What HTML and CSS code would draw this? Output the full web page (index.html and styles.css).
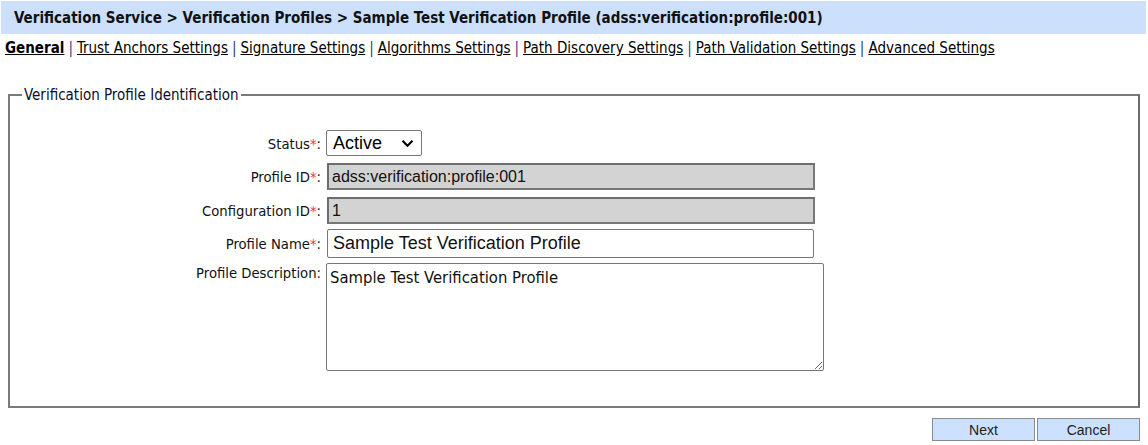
FILE: index.html
```html
<!DOCTYPE html>
<html>
<head>
<meta charset="utf-8">
<link rel="stylesheet" href="styles.css">
</head>
<body>
<div class="titlebar">Verification Service &gt; Verification Profiles &gt; Sample Test Verification Profile (adss:verification:profile:001)</div>
<div class="tabs">
  <a class="tab active" href="#">General</a><span class="sep">|</span><a class="tab" href="#">Trust Anchors Settings</a><span class="sep">|</span><a class="tab" href="#">Signature Settings</a><span class="sep">|</span><a class="tab" href="#">Algorithms Settings</a><span class="sep">|</span><a class="tab" href="#">Path Discovery Settings</a><span class="sep">|</span><a class="tab" href="#">Path Validation Settings</a><span class="sep">|</span><a class="tab" href="#">Advanced Settings</a>
</div>
<fieldset class="box">
  <legend class="box-title">Verification Profile Identification</legend>
  <div class="form">
    <label class="lbl">Status<span class="req">*</span>:</label>
    <div class="field">
      <div class="select">Active
        <svg class="chev" width="13" height="9" viewBox="0 0 13 9"><path d="M1.5 1.8 L6.5 6.8 L11.5 1.8" fill="none" stroke="#000" stroke-width="2.2"/></svg>
      </div>
    </div>
    <label class="lbl spaced">Profile ID<span class="req">*</span>:</label>
    <div class="field spaced"><input class="inp ro" type="text" value="adss:verification:profile:001" readonly></div>
    <label class="lbl spaced">Configuration ID<span class="req">*</span>:</label>
    <div class="field spaced"><input class="inp ro" type="text" value="1" readonly></div>
    <label class="lbl">Profile Name<span class="req">*</span>:</label>
    <div class="field"><input class="inp name" type="text" value="Sample Test Verification Profile"></div>
    <label class="lbl top">Profile Description:</label>
    <div class="field"><textarea class="desc">Sample Test Verification Profile</textarea></div>
  </div>
</fieldset>
<div class="actions">
  <button class="btn">Next</button><button class="btn">Cancel</button>
</div>
</body>
</html>
```
FILE: styles.css
```css
html, body {
  margin: 0;
  padding: 0;
  background: #fff;
}
body {
  font-family: "DejaVu Sans Condensed", "DejaVu Sans", sans-serif;
  font-size: 14.7px;
  color: #000;
}
.titlebar {
  margin: 1px 2px 0 1px;
  height: 33px;
  line-height: 34px;
  background: #cce0fb;
  padding-left: 13px;
  font-weight: bold;
  font-size: 15px;
  color: #111;
}
.tabs {
  margin-top: 4px;
  padding-left: 5px;
  height: 20px;
  line-height: 20px;
  font-size: 15px;
}
.tab {
  color: #000;
  text-decoration: underline;
}
.tab.active {
  font-weight: bold;
}
.sep {
  color: #1d3f7a;
  margin: 0 4px;
}
.box {
  margin: 28px 8px 0 8px;
  padding: 26px 0 35px 0;
  border: 2px solid #7a7a7a;
  border-right-color: #6a6a6a;
  min-width: 0;
}
.box-title {
  margin-left: 12px;
  padding: 0 2px;
  font-size: 15px;
  color: #0d0d2a;
}
.form {
  display: grid;
  grid-template-columns: 311px 1fr;
  column-gap: 6px;
  row-gap: 5px;
  align-items: center;
}
.spaced {
  margin-top: 2px;
}
.lbl {
  text-align: right;
  color: #111;
}
.lbl.top {
  align-self: start;
  padding-top: 1px;
}
.req {
  color: #f33;
}
.field {
  display: flex;
}
.select {
  box-sizing: border-box;
  width: 96px;
  height: 26px;
  border: 1px solid #767676;
  border-radius: 2px;
  padding-left: 6px;
  font-family: "Liberation Sans", Arial, sans-serif;
  font-size: 18px;
  line-height: 24px;
  display: flex;
  align-items: center;
  justify-content: space-between;
  padding-right: 7px;
  margin-left: -1px;
}
.inp {
  box-sizing: border-box;
  width: 488px;
  height: 27px;
  margin: 0;
  padding: 0 3px;
  font-family: "Liberation Sans", Arial, sans-serif;
  font-size: 16px;
  color: #111;
  outline: none;
}
.inp.ro {
  background: #d3d3d3;
  border: 2px solid #6d6d6d;
  border-right-color: #777;
  border-bottom-color: #777;
}
.inp.name {
  width: 487px;
  height: 29px;
  border: 1px solid #767676;
  border-radius: 2px;
  padding: 0 5px;
  font-size: 18px;
}
.desc {
  box-sizing: border-box;
  width: 498px;
  height: 108px;
  margin: 0 0 0 -1px;
  padding: 4px 3px;
  border: 1px solid #767676;
  border-radius: 2px;
  font-family: "DejaVu Sans Condensed", "DejaVu Sans", sans-serif;
  font-size: 16.5px;
  color: #111;
  resize: both;
}
.actions {
  display: flex;
  justify-content: flex-end;
  gap: 2px;
  margin: 10px 8px 0 0;
}
.btn {
  box-sizing: border-box;
  width: 103px;
  height: 23px;
  margin: 0;
  padding: 0;
  background: #cce0ff;
  border: 1px solid #8a8a8a;
  font-family: "Liberation Sans", Arial, sans-serif;
  font-size: 14px;
  color: #222;
}
```
